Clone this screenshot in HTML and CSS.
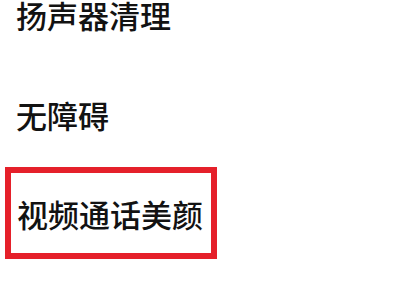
FILE: index.html
```html
<!DOCTYPE html>
<html lang="zh-CN">
<head>
<meta charset="utf-8">
<link rel="stylesheet" href="styles.css">
</head>
<body>
<div class="list">
  <div class="row"><span class="label">扬声器清理</span></div>
  <div class="row"><span class="label">无障碍</span></div>
  <div class="row boxed"><div class="highlight"><span class="label">视频通话美颜</span></div></div>
</div>
</body>
</html>
```

FILE: styles.css
```css
html, body {
  margin: 0;
  padding: 0;
  background: #ffffff;
  width: 400px;
  height: 300px;
  overflow: hidden;
}
.list {
  margin-top: -36px;
  display: flex;
  flex-direction: column;
}
.row {
  height: 100px;
  display: flex;
  align-items: center;
  padding-left: 16px;
}
.row.boxed {
  padding-left: 5px;
  height: 98px;
}
.label {
  font-family: "Noto Sans CJK SC", "Noto Sans", sans-serif;
  font-size: 31px;
  font-weight: 500;
  color: #121212;
  line-height: 1;
}
.highlight {
  box-sizing: border-box;
  width: 212px;
  height: 92px;
  border: 6px solid #e5202a;
  display: flex;
  align-items: center;
  padding-left: 6px;
}
```
